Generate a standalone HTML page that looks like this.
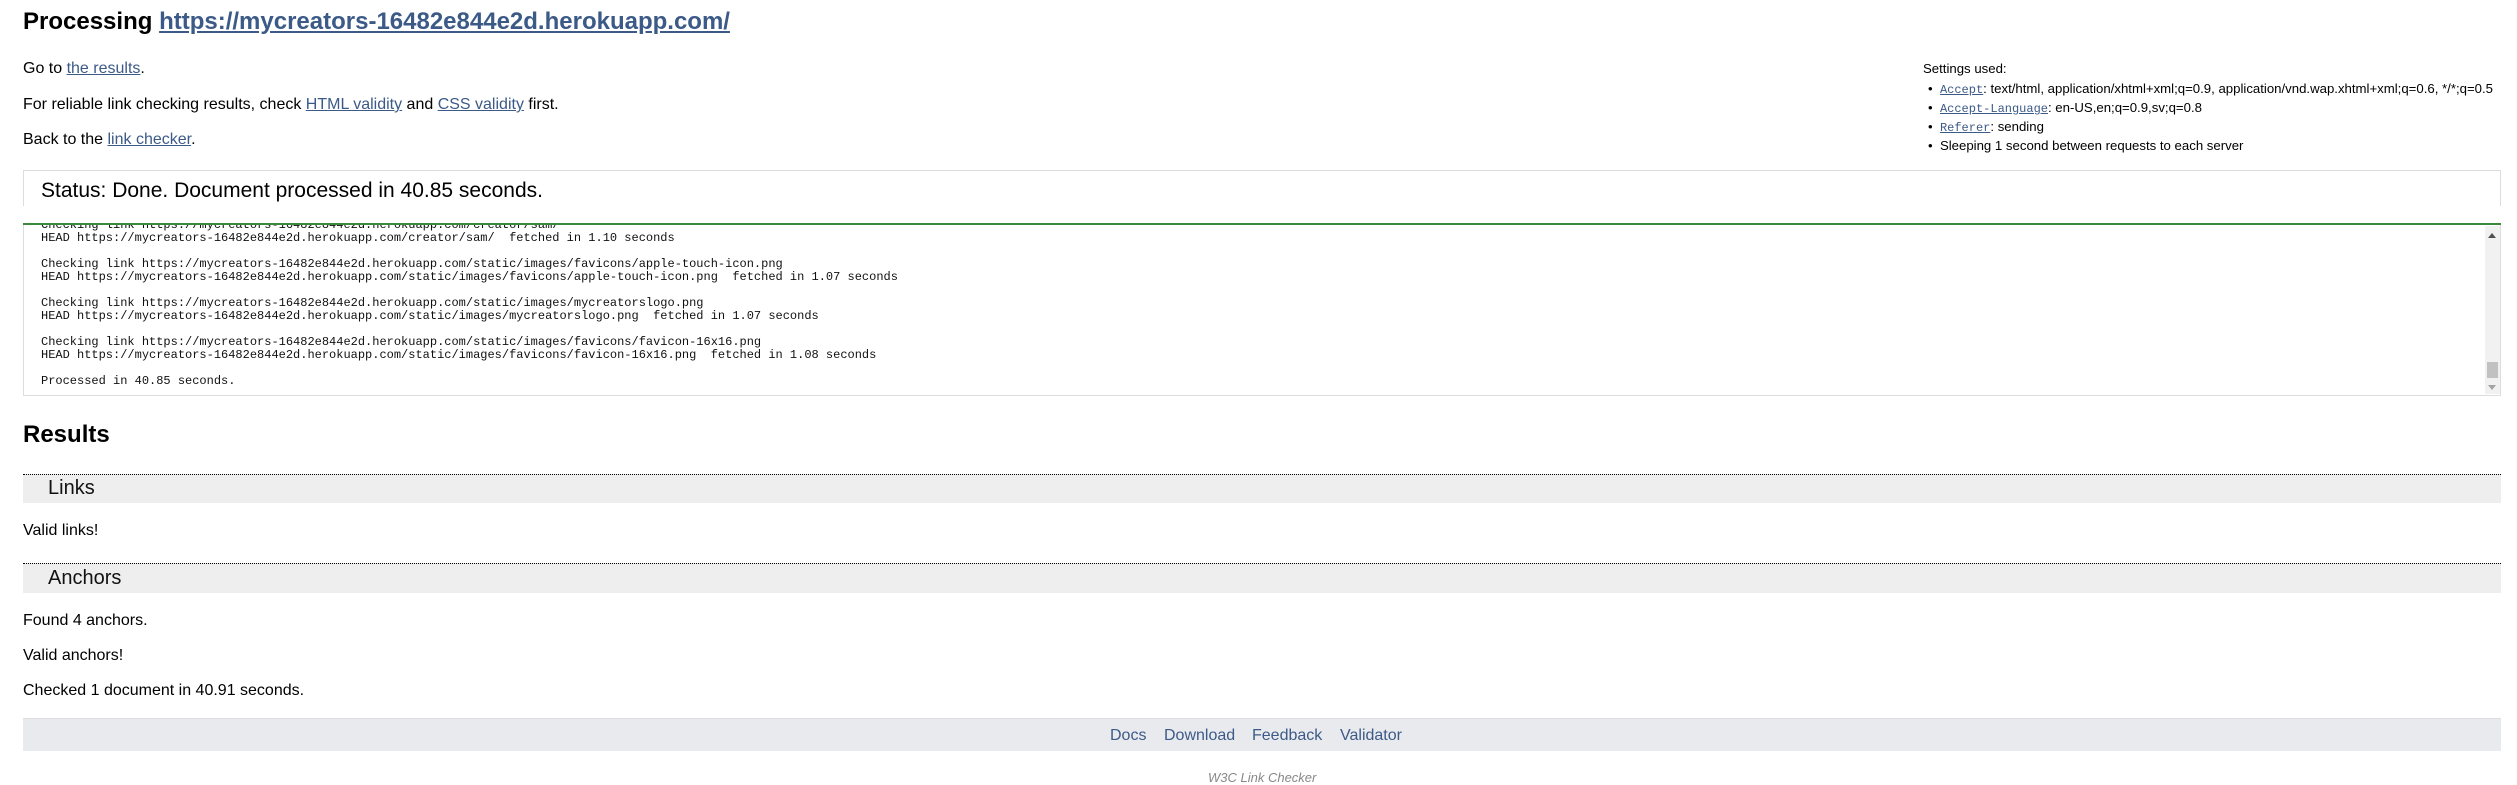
<!DOCTYPE html>
<html><head><meta charset="utf-8"><style>
html,body{margin:0;padding:0;width:2517px;height:777px;overflow:hidden;background:#fff;font-family:"Liberation Sans",Arial,sans-serif;color:#000}
.a{position:absolute;line-height:1;white-space:nowrap}
a{color:#3c5a87;text-decoration:underline}
.m{font-family:"Liberation Mono",monospace}
.band{position:absolute;left:23px;width:2478px;background:#eee;border-top:1px dotted #000}
</style></head><body>
<div class="a" style="left:23px;top:10px;font-size:24px;font-weight:bold">Processing <a href="#">https://mycreators-16482e844e2d.herokuapp.com/</a></div>
<div class="a" style="left:23px;top:61px;font-size:16px">Go to <a href="#">the results</a>.</div>
<div class="a" style="left:23px;top:97px;font-size:16px">For reliable link checking results, check <a href="#">HTML validity</a> and <a href="#">CSS validity</a> first.</div>
<div class="a" style="left:23px;top:132px;font-size:16px">Back to the <a href="#">link checker</a>.</div>

<div class="a" style="left:1923px;top:62px;font-size:13.2px">Settings used:</div>
<div class="a" style="left:1928px;top:82px;font-size:13.2px">•&nbsp;&nbsp;<a class="m" style="font-size:12px" href="#">Accept</a>: text/html, application/xhtml+xml;q=0.9, application/vnd.wap.xhtml+xml;q=0.6, */*;q=0.5</div>
<div class="a" style="left:1928px;top:101px;font-size:13.2px">•&nbsp;&nbsp;<a class="m" style="font-size:12px" href="#">Accept-Language</a>: en-US,en;q=0.9,sv;q=0.8</div>
<div class="a" style="left:1928px;top:120px;font-size:13.2px">•&nbsp;&nbsp;<a class="m" style="font-size:12px" href="#">Referer</a>: sending</div>
<div class="a" style="left:1928px;top:139px;font-size:13.2px">•&nbsp;&nbsp;Sleeping 1 second between requests to each server</div>

<div style="position:absolute;left:23px;top:170px;width:2476px;height:35px;border:1px solid #ddd;border-bottom:none"></div>
<div class="a" style="left:41px;top:180px;font-size:21px">Status: Done. Document processed in 40.85 seconds.</div>
<div style="position:absolute;left:23px;top:223px;width:2478px;height:2px;background:#3a8a3a"></div>
<div style="position:absolute;left:23px;top:225px;width:2476px;height:170px;border:1px solid #ddd;border-top:none;overflow:hidden">
<pre class="m" style="position:absolute;left:17px;top:-6px;margin:0;font-size:12px;line-height:13px;color:#111">Checking link https://mycreators-16482e844e2d.herokuapp.com/creator/sam/
HEAD https://mycreators-16482e844e2d.herokuapp.com/creator/sam/  fetched in 1.10 seconds

Checking link https://mycreators-16482e844e2d.herokuapp.com/static/images/favicons/apple-touch-icon.png
HEAD https://mycreators-16482e844e2d.herokuapp.com/static/images/favicons/apple-touch-icon.png  fetched in 1.07 seconds

Checking link https://mycreators-16482e844e2d.herokuapp.com/static/images/mycreatorslogo.png
HEAD https://mycreators-16482e844e2d.herokuapp.com/static/images/mycreatorslogo.png  fetched in 1.07 seconds

Checking link https://mycreators-16482e844e2d.herokuapp.com/static/images/favicons/favicon-16x16.png
HEAD https://mycreators-16482e844e2d.herokuapp.com/static/images/favicons/favicon-16x16.png  fetched in 1.08 seconds

Processed in 40.85 seconds.</pre>
<div style="position:absolute;right:0;top:1px;width:15px;height:168px;background:#f1f1f1"></div>
<div style="position:absolute;right:4px;top:8px;width:0;height:0;border-left:4px solid transparent;border-right:4px solid transparent;border-bottom:5px solid #505050"></div>
<div style="position:absolute;right:2px;top:137px;width:11px;height:16px;background:#c1c1c1"></div>
<div style="position:absolute;right:4px;top:160px;width:0;height:0;border-left:4px solid transparent;border-right:4px solid transparent;border-top:5px solid #a3a3a3"></div>
</div>

<div class="a" style="left:23px;top:423px;font-size:24px;font-weight:bold">Results</div>
<div class="band" style="top:474px;height:28px"></div>
<div class="a" style="left:48px;top:478px;font-size:20px;color:#111">Links</div>
<div class="a" style="left:23px;top:523px;font-size:16px">Valid links!</div>
<div class="band" style="top:563px;height:29px"></div>
<div class="a" style="left:48px;top:568px;font-size:20px;color:#111">Anchors</div>
<div class="a" style="left:23px;top:613px;font-size:16px">Found 4 anchors.</div>
<div class="a" style="left:23px;top:648px;font-size:16px">Valid anchors!</div>
<div class="a" style="left:23px;top:683px;font-size:16px">Checked 1 document in 40.91 seconds.</div>

<div style="position:absolute;left:23px;top:718px;width:2478px;height:32px;background:#e9eaee;border-top:1px solid #dcdde0"></div>
<div class="a" style="left:1110px;top:728px;font-size:16px"><a href="#" style="text-decoration:none">Docs</a></div>
<div class="a" style="left:1164px;top:728px;font-size:16px"><a href="#" style="text-decoration:none">Download</a></div>
<div class="a" style="left:1252px;top:728px;font-size:16px"><a href="#" style="text-decoration:none">Feedback</a></div>
<div class="a" style="left:1340px;top:728px;font-size:16px"><a href="#" style="text-decoration:none">Validator</a></div>
<div class="a" style="left:1208px;top:771px;font-size:13px;font-style:italic;color:#888">W3C Link Checker</div>
</body></html>
